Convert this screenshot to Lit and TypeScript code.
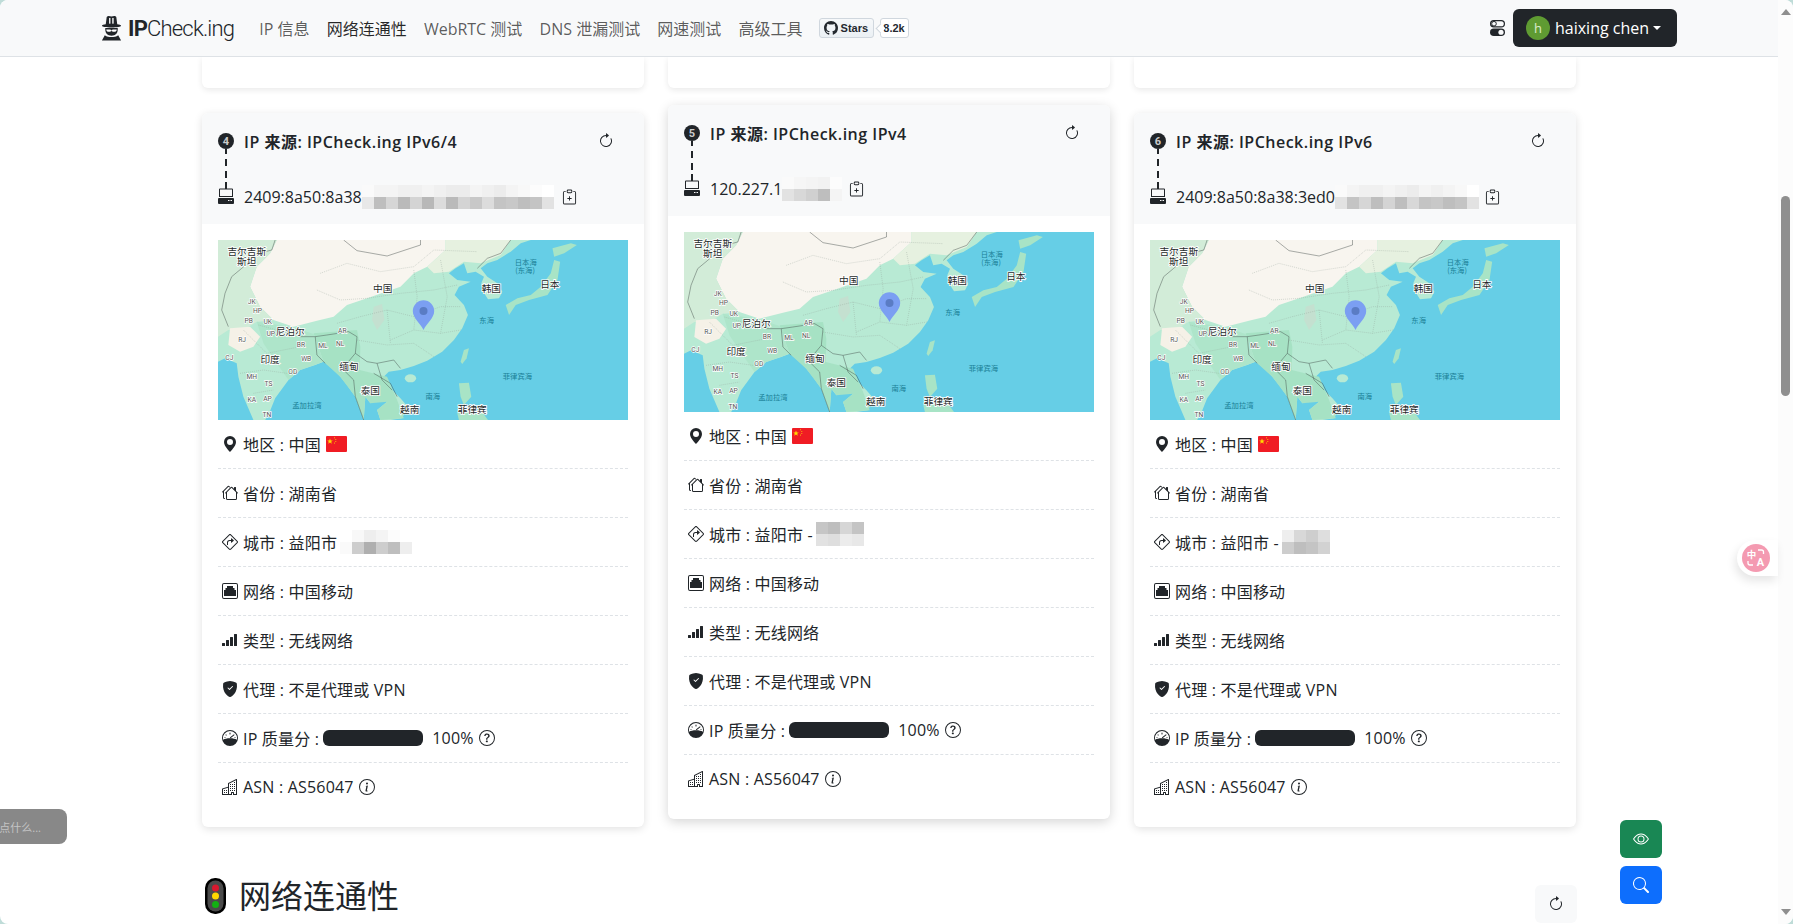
import { LitElement, html, css, svg } from "lit";
import { customElement } from "lit/decorators.js";

const P = {
  refresh: svg`<path fill-rule="evenodd" d="M8 3a5 5 0 1 0 4.546 2.914.5.5 0 0 1 .908-.417A6 6 0 1 1 8 2v1z"/><path d="M8 4.466V.534a.25.25 0 0 1 .41-.192l2.36 1.966c.12.1.12.284 0 .384L8.41 4.658A.25.25 0 0 1 8 4.466z"/>`,
  pin: svg`<path d="M8 16s6-5.686 6-10A6 6 0 0 0 2 6c0 4.314 6 10 6 10zm0-7a3 3 0 1 1 0-6 3 3 0 0 1 0 6z"/>`,
  houses: svg`<path d="M5.793 1a1 1 0 0 1 1.414 0l.647.646a.5.5 0 1 1-.708.708L6.5 1.707 2 6.207V12.5a.5.5 0 0 0 .5.5.5.5 0 0 1 0 1A1.5 1.5 0 0 1 1 12.5V7.207l-.146.147a.5.5 0 0 1-.708-.708L5.793 1Zm3 1a1 1 0 0 1 1.414 0L12 3.793V2.5a.5.5 0 0 1 .5-.5h1a.5.5 0 0 1 .5.5v3.293l1.854 1.853a.5.5 0 0 1-.708.708L15 8.207V13.5a1.5 1.5 0 0 1-1.5 1.5h-8A1.5 1.5 0 0 1 4 13.5V8.207l-.146.147a.5.5 0 1 1-.708-.708L8.793 2Zm.707.707L5 7.207V13.5a.5.5 0 0 0 .5.5h8a.5.5 0 0 0 .5-.5V7.207l-4.5-4.5Z"/>`,
  sign: svg`<path d="M5 8.5A2.5 2.5 0 0 1 7.5 6H9V4.534a.25.25 0 0 1 .41-.192l2.36 1.966c.12.1.12.284 0 .384L9.41 8.658A.25.25 0 0 1 9 8.466V7H7.5A1.5 1.5 0 0 0 6 8.5V11H5V8.5Z"/><path d="M6.95.435c.58-.58 1.52-.58 2.1 0l6.515 6.516c.58.58.58 1.519 0 2.098L9.05 15.565c-.58.58-1.519.58-2.098 0L.435 9.05a1.482 1.482 0 0 1 0-2.098L6.95.435Zm1.4.7a.495.495 0 0 0-.7 0L1.134 7.65a.495.495 0 0 0 0 .7l6.516 6.516a.495.495 0 0 0 .7 0l6.516-6.516a.495.495 0 0 0 0-.7L8.35 1.134Z"/>`,
  ethernet: svg`<path fill-rule="evenodd" d="M2 0h12a2 2 0 0 1 2 2v12a2 2 0 0 1-2 2H2a2 2 0 0 1-2-2V2a2 2 0 0 1 2-2Zm0 1a1 1 0 0 0-1 1v12a1 1 0 0 0 1 1h12a1 1 0 0 0 1-1V2a1 1 0 0 0-1-1H2Z"/><path d="M5 3h6v2h1.500v2H14v6H2V7h1.500V5H5V3Z"/>`,
  bars: svg`<path d="M0 11.5a.5.5 0 0 1 .5-.5h2a.5.5 0 0 1 .5.5v2a.5.5 0 0 1-.5.5h-2a.5.5 0 0 1-.5-.5v-2zm4-3a.5.5 0 0 1 .5-.5h2a.5.5 0 0 1 .5.5v5a.5.5 0 0 1-.5.5h-2a.5.5 0 0 1-.5-.5v-5zm4-3a.5.5 0 0 1 .5-.5h2a.5.5 0 0 1 .5.5v8a.5.5 0 0 1-.5.5h-2a.5.5 0 0 1-.5-.5v-8zm4-3a.5.5 0 0 1 .5-.5h2a.5.5 0 0 1 .5.5v11a.5.5 0 0 1-.5.5h-2a.5.5 0 0 1-.5-.5v-11z"/>`,
  shield: svg`<path fill-rule="evenodd" d="M8 0c-.69 0-1.843.265-2.928.56-1.11.3-2.229.655-2.887.87a1.54 1.54 0 0 0-1.044 1.262c-.596 4.477.787 7.795 2.465 9.99a11.777 11.777 0 0 0 2.517 2.453c.386.273.744.482 1.048.625.28.132.581.24.829.24s.548-.108.829-.24a7.159 7.159 0 0 0 1.048-.625 11.775 11.775 0 0 0 2.517-2.453c1.678-2.195 3.061-5.513 2.465-9.99a1.541 1.541 0 0 0-1.044-1.263 62.467 62.467 0 0 0-2.887-.87C9.843.266 8.69 0 8 0zm2.146 5.146a.5.5 0 0 1 .708.708l-3 3a.5.5 0 0 1-.708 0l-1.5-1.5a.5.5 0 1 1 .708-.708L7.5 7.793l2.646-2.647z"/>`,
  gauge: svg`<path fill-rule="evenodd" d="M8 0a8 8 0 1 1 0 16A8 8 0 0 1 8 0Zm0 1a7 7 0 0 0-6.800 8.700C2.600 8.900 5 8.300 8 8.300s5.400.6 6.800 1.400A7 7 0 0 0 8 1Z"/><path d="M8 2.500a.5.5 0 0 1 .5.5v1a.5.5 0 0 1-1 0V3a.5.5 0 0 1 .5-.5ZM4 4.300l.8.800-.6.600-.8-.8.6-.6Zm8 0 .6.600-4.100 3.400-.7-.7 4.200-3.300ZM2.500 7h1v.8h-1V7Zm10 0h1v.8h-1V7Z"/>`,
  buildings: svg`<path d="M14.763.075A.5.5 0 0 1 15 .5v15a.5.5 0 0 1-.5.5h-3a.5.5 0 0 1-.5-.5V14h-1v1.500a.5.5 0 0 1-.5.5h-9a.5.5 0 0 1-.5-.5V10a.5.5 0 0 1 .342-.474L6 7.640V4.500a.5.5 0 0 1 .276-.447l8-4a.5.5 0 0 1 .487.022ZM6 8.694 1 10.360V15h5V8.694ZM7 15h2v-1.500a.5.5 0 0 1 .5-.5h2a.5.5 0 0 1 .5.5V15h2V1.309l-7 3.500V15Z"/><path d="M2 11h1v1H2v-1Zm2 0h1v1H4v-1Zm-2 2h1v1H2v-1Zm2 0h1v1H4v-1Zm4-4h1v1H8V9Zm2 0h1v1h-1V9Zm-2 2h1v1H8v-1Zm2 0h1v1h-1v-1Zm2-2h1v1h-1V9Zm0 2h1v1h-1v-1ZM8 7h1v1H8V7Zm2 0h1v1h-1V7Zm2 0h1v1h-1V7ZM8 5h1v1H8V5Zm2 0h1v1h-1V5Zm2 0h1v1h-1V5Zm0-2h1v1h-1V3Z"/>`,
  question: svg`<path d="M8 15A7 7 0 1 1 8 1a7 7 0 0 1 0 14zm0 1A8 8 0 1 0 8 0a8 8 0 0 0 0 16z"/><path d="M5.255 5.786a.237.237 0 0 0 .241.247h.825c.138 0 .248-.113.266-.25.09-.656.54-1.134 1.342-1.134.686 0 1.314.343 1.314 1.168 0 .635-.374.927-.965 1.371-.673.489-1.206 1.06-1.168 1.987l.003.217a.25.25 0 0 0 .25.246h.811a.25.25 0 0 0 .25-.25v-.105c0-.718.273-.927 1.01-1.486.609-.463 1.244-.977 1.244-2.056 0-1.511-1.276-2.241-2.673-2.241-1.267 0-2.655.59-2.75 2.286zm1.557 5.763c0 .533.425.927 1.01.927.609 0 1.028-.394 1.028-.927 0-.552-.42-.94-1.029-.94-.584 0-1.009.388-1.009.94z"/>`,
  info: svg`<path d="M8 15A7 7 0 1 1 8 1a7 7 0 0 1 0 14zm0 1A8 8 0 1 0 8 0a8 8 0 0 0 0 16z"/><path d="m8.93 6.588-2.29.287-.082.38.45.083c.294.07.352.176.288.469l-.738 3.468c-.194.897.105 1.319.808 1.319.545 0 1.178-.252 1.465-.598l.088-.416c-.2.176-.492.246-.686.246-.275 0-.375-.193-.304-.533L8.93 6.588zM9 4.500a1 1 0 1 1-2 0 1 1 0 0 1 2 0z"/>`,
  eye: svg`<path d="M16 8s-3-5.500-8-5.500S0 8 0 8s3 5.500 8 5.500S16 8 16 8zM1.173 8a13.133 13.133 0 0 1 1.660-2.043C4.120 4.668 5.880 3.500 8 3.500c2.120 0 3.879 1.168 5.168 2.457A13.133 13.133 0 0 1 14.828 8c-.058.087-.122.183-.195.288-.335.480-.830 1.120-1.465 1.755C11.879 11.332 10.119 12.500 8 12.500c-2.120 0-3.879-1.168-5.168-2.457A13.134 13.134 0 0 1 1.172 8z"/><path d="M8 5.500a2.500 2.500 0 1 0 0 5 2.500 2.500 0 0 0 0-5zM4.500 8a3.500 3.500 0 1 1 7 0 3.500 3.500 0 0 1-7 0z"/>`,
  search: svg`<path d="M11.742 10.344a6.500 6.500 0 1 0-1.397 1.398h-.001c.03.04.062.078.098.115l3.850 3.850a1 1 0 0 0 1.415-1.414l-3.850-3.850a1.007 1.007 0 0 0-.115-.1zM12 6.500a5.500 5.500 0 1 1-11 0 5.500 5.500 0 0 1 11 0z"/>`,
  github: svg`<path d="M8 0C3.580 0 0 3.580 0 8c0 3.540 2.290 6.530 5.470 7.590.4.07.55-.17.55-.38 0-.19-.01-.82-.01-1.490-2.010.37-2.530-.49-2.690-.94-.09-.23-.48-.94-.82-1.130-.28-.15-.68-.52-.01-.53.63-.01 1.080.58 1.230.82.72 1.210 1.870.87 2.330.66.07-.52.28-.87.51-1.070-1.780-.2-3.640-.89-3.640-3.950 0-.87.31-1.590.82-2.150-.08-.2-.36-1.020.08-2.120 0 0 .67-.21 2.200.82.64-.18 1.320-.27 2-.27.68 0 1.360.09 2 .27 1.530-1.040 2.200-.82 2.200-.82.44 1.100.16 1.920.08 2.120.51.56.82 1.270.82 2.150 0 3.070-1.870 3.750-3.650 3.950.29.25.54.73.54 1.480 0 1.070-.01 1.930-.01 2.200 0 .21.15.46.55.38A8.012 8.012 0 0 0 16 8c0-4.420-3.580-8-8-8z"/>`,
  clip: svg`<path d="M4 1.500H3a2 2 0 0 0-2 2V14a2 2 0 0 0 2 2h10a2 2 0 0 0 2-2V3.500a2 2 0 0 0-2-2h-1v1h1a1 1 0 0 1 1 1V14a1 1 0 0 1-1 1H3a1 1 0 0 1-1-1V3.500a1 1 0 0 1 1-1h1v-1z"/><path d="M9.500 1a.5.5 0 0 1 .5.5v1a.5.5 0 0 1-.5.5h-3a.5.5 0 0 1-.5-.5v-1a.5.5 0 0 1 .5-.5h3zm-3-1A1.500 1.500 0 0 0 5 1.500v1A1.500 1.500 0 0 0 6.500 4h3A1.500 1.500 0 0 0 11 2.500v-1A1.500 1.500 0 0 0 9.500 0h-3z"/><path d="M8 7a.5.5 0 0 1 .5.5V9H10a.5.5 0 0 1 0 1H8.500v1.500a.5.5 0 0 1-1 0V10H6a.5.5 0 0 1 0-1h1.500V7.500A.5.5 0 0 1 8 7z"/>`,
};

const icon = (p: unknown, cls = "ico") =>
  html`<svg class=${cls} viewBox="0 0 16 16" fill="currentColor">${p}</svg>`;

const LABELS: [string, number, number][] = [
  ["吉尔吉斯", 140, 68], ["斯坦", 140, 96], ["中国", 547, 178], ["韩国", 872, 178], ["日本", 1047, 165],
  ["尼泊尔", 270, 307], ["印度", 210, 390], ["缅甸", 446, 412], ["泰国", 510, 485], ["越南", 628, 541], ["菲律宾", 815, 541],
];
const SEA: [string, number, number][] = [
  ["日本海", 975, 100], ["(东海)", 973, 124], ["东海", 858, 272], ["南海", 697, 500], ["菲律宾海", 950, 440], ["孟加拉湾", 320, 528],
];
const ABBR: [string, number, number][] = [
  ["JK", 155, 218], ["HP", 172, 245], ["PB", 146, 273], ["UK", 203, 276], ["UP", 212, 312], ["RJ", 126, 330], ["BR", 302, 345],
  ["ML", 368, 348], ["NL", 420, 342], ["AR", 426, 303], ["WB", 318, 388], ["CJ", 88, 384], ["MH", 155, 441], ["TS", 205, 464],
  ["OD", 278, 426], ["KA", 155, 511], ["AP", 202, 507], ["TN", 200, 556],
];

const LAND = "M54 30L990 30L960 40L930 65L890 90L860 100L840 115L860 140L890 160L905 185L895 205L862 208L848 185L842 160L850 140L825 125L800 130L790 100L765 115L745 130L770 150L810 155L775 170L762 195L790 225L802 255L785 295L760 330L725 365L680 392L640 408L600 420L565 425L540 450L575 480L600 505L622 530L605 565L570 570L540 570L530 540L560 515L540 505L510 520L495 500L490 570L465 500L440 465L420 440L395 415L370 395L345 405L300 420L265 450L225 505L205 555L195 570L160 570L130 500L115 440L110 400L75 385L54 395Z";

const mapView = () => html`<svg class="map" viewBox="54 30 1227 540" preserveAspectRatio="none">
  <rect x="54" y="30" width="1227" height="540" fill="#66cee6"/>
  <path d=${LAND} fill="#b8ead4"/>
  <path d="M230 30L735 30L735 60L680 110L640 130L600 170L500 205L440 225L400 260L350 272L280 290L220 270L180 230L150 170L170 110L210 70Z" fill="#f8f5ef"/>
  <path d="M735 30L930 30L900 75L840 100L790 95L745 125L700 130L680 110L735 60Z" fill="#e6f1e0"/>
  <path d="M54 30L230 30L210 70L170 110L150 170L180 230L220 270L170 275L130 300L85 300L54 320Z" fill="#d2ecd8"/>
  <path d="M90 295L150 290L180 320L160 350L120 365L85 345Z" fill="#f5f1e7"/>
  <path d="M340 310L470 300L480 350L478 420L560 440L590 510L610 565L540 570L530 540L560 515L510 520L495 500L490 570L465 500L420 440L370 395Z" fill="#a6e2c4"/>
  <path d="M170 275L280 292L340 312L370 395L300 420L265 450L230 400L190 340Z" fill="#aee5ca"/>
  <path d="M520 230L545 222L552 270L530 300L515 270Z" fill="#c4e0d0"/>
  <path d="M915 225L925 255L945 225L985 210L1040 195L1070 150L1078 95L1060 90L1050 130L1020 170L990 195L950 205Z" fill="#a8e4c6"/>
  <path d="M1055 55L1110 40L1128 45L1090 70L1060 80Z" fill="#a8e4c6"/>
  <path d="M780 395L790 360L805 355L798 385L785 402Z" fill="#a8e4c6"/>
  <ellipse cx="630" cy="445" rx="17" ry="12" fill="#b8ead4"/>
  <path d="M775 460L805 458L812 500L790 525L780 500Z" fill="#a8e4c6"/>
  <path d="M770 550L840 540L862 570L775 570Z" fill="#a8e4c6"/>
  <g fill="none" stroke="#3c4644" stroke-width="1.300">
    <path d="M430 30L470 62L560 78L660 45L660 30"/>
    <path d="M930 30L900 70L860 85L830 115"/>
    <path d="M225 30L215 60L175 70L125 115L95 140L75 190L65 240L85 290"/>
    <path d="M300 320L345 320L380 315L445 305L470 320L465 370L500 395L530 400L580 390L600 415"/>
    <path d="M345 320L350 375L375 400M465 370L440 400L420 410L460 450L465 500L490 570M530 400L545 450L575 480M520 430L570 460L590 500"/>
  </g>
  <g fill="none" stroke="#8f9e96" stroke-width="1.100" stroke-dasharray="3 3">
    <path d="M175 285L230 300L300 320M360 130L440 100L540 125L640 110L700 60L830 65M350 180L420 210L500 205L600 190L700 180L770 165M480 260L560 240L640 260L720 230L780 230M570 330L640 300L720 310L780 300M470 330L560 345L640 340L700 380M640 120L650 200L640 300M720 90L740 200L720 310M560 240L570 340M410 280L480 260"/>
    <path d="M130 300L200 370L250 360L300 350M120 430L190 420L260 430M160 490L220 480"/>
  </g>
  <g font-family="'Noto Sans CJK SC',sans-serif" font-size="29" fill="#1d2a2a" text-anchor="middle" dominant-baseline="middle" paint-order="stroke" stroke="#fff" stroke-width="5">
    ${LABELS.map(([t, x, y]) => svg`<text x=${x} y=${y}>${t}</text>`)}
  </g>
  <g font-family="'Noto Sans CJK SC',sans-serif" font-size="22" fill="#1a7f96" text-anchor="middle" dominant-baseline="middle">
    ${SEA.map(([t, x, y]) => svg`<text x=${x} y=${y}>${t}</text>`)}
  </g>
  <g font-family="Roboto,sans-serif" font-size="20" fill="#555" text-anchor="middle" dominant-baseline="middle" paint-order="stroke" stroke="#fff" stroke-width="4">
    ${ABBR.map(([t, x, y]) => svg`<text x=${x} y=${y}>${t}</text>`)}
  </g>
  <path d="M669 300C660 280 637 265 637 243A32 32 0 0 1 701 243C701 265 678 280 669 300Z" fill="#7b9ff2"/>
  <circle cx="669" cy="243" r="12" fill="#5a7cc4"/>
</svg>`;

const flag = () => html`<svg class="flag" viewBox="0 0 21 16">
  <rect width="21" height="16" rx="1" fill="#f01c24"/>
  <path d="M4 2.500l.8 1.900 2 .1-1.600 1.200.6 2-1.800-1.100-1.800 1.100.6-2L1.200 4.500l2-.1Z" fill="#ffdc00"/>
  <circle cx="8.500" cy="1.800" r=".5" fill="#ffdc00"/><circle cx="9.800" cy="3.400" r=".5" fill="#ffdc00"/>
  <circle cx="9.800" cy="5.400" r=".5" fill="#ffdc00"/><circle cx="8.500" cy="7" r=".5" fill="#ffdc00"/>
</svg>`;

const mosaic = (rows: number[][]) => html`<span class="mosaic">${rows.map(
  (r) => html`<span class="mrow">${r.map((v) => html`<i style="background:rgb(${v},${v},${v})"></i>`)}</span>`
)}</span>`;

interface CardData {
  n: number;
  title: string;
  ip: string;
  ipBlur: number[][];
  ipGap: number;
  city: string;
  cityBlur: number[][];
  lift?: boolean;
}

const CARDS: CardData[] = [
  {
    n: 4, title: "IP 来源: IPCheck.ing IPv6/4", ip: "2409:8a50:8a38", ipGap: 8,
    ipBlur: [
      [250, 244, 244, 240, 240, 244, 240, 236, 236, 244, 240, 236, 244, 248, 252, 255],
      [232, 190, 214, 186, 212, 184, 220, 186, 212, 200, 220, 196, 200, 190, 196, 226],
    ],
    city: "城市 : 益阳市", cityBlur: [[255, 248, 238, 244, 252, 255], [250, 205, 175, 205, 190, 238]],
  },
  {
    n: 5, title: "IP 来源: IPCheck.ing IPv4", ip: "120.227.1", ipGap: 7, lift: true,
    ipBlur: [[250, 246, 244, 242, 252], [226, 216, 208, 190, 244]],
    city: "城市 : 益阳市 -", cityBlur: [[198, 190, 214, 196], [226, 222, 236, 232]],
  },
  {
    n: 6, title: "IP 来源: IPCheck.ing IPv6", ip: "2409:8a50:8a38:3ed0", ipGap: 6,
    ipBlur: [
      [250, 244, 240, 240, 244, 240, 236, 244, 240, 244, 248, 255],
      [226, 196, 214, 190, 212, 190, 216, 196, 200, 190, 196, 226],
    ],
    city: "城市 : 益阳市 -", cityBlur: [[238, 216, 206, 222], [205, 190, 196, 210]],
  },
];

@customElement("app-root")
export class AppRoot extends LitElement {
  static styles = css`
    :host { display: block; height: 924px; background: #bfdcd8; font-family: "Open Sans", "Noto Sans CJK SC", sans-serif; font-size: 16px; color: #212529; overflow: hidden; }
    * { box-sizing: border-box; }
    .frame { position: relative; display: flex; height: 924px; background: #fff; border-radius: 8px; overflow: hidden; }
    .page { flex: 1; min-width: 0; display: flex; flex-direction: column; }
    .nav { flex: none; height: 57px; background: #f8f9fa; border-bottom: 1px solid #dee2e6; display: flex; align-items: center; padding: 0 101px 0 100px; }
    .brand { display: flex; align-items: center; gap: 5px; margin-right: 25px; font-family: Roboto, sans-serif; font-size: 22px; font-weight: 300; letter-spacing: -0.8px; color: #212529; }
    .brand b { font-weight: 700; }
    .brand svg { width: 23px; height: 26px; display: block; }
    .links { display: flex; gap: 17.200px; color: rgba(0, 0, 0, 0.65); }
    .links .on { color: rgba(0, 0, 0, 0.85); }
    .gh { display: flex; align-items: center; margin-left: 16px; font: 700 11px "Liberation Sans", sans-serif; color: #24292f; }
    .gh-btn { display: flex; align-items: center; gap: 3px; height: 20px; width: 55px; padding-left: 4px; border: 1px solid #d0d7de; border-radius: 3px; background: linear-gradient(#f6f8fa, #ebf0f4); }
    .gh-btn svg { width: 14px; height: 14px; }
    .gh-count { position: relative; margin-left: 6px; height: 20px; width: 29px; display: flex; align-items: center; justify-content: center; border: 1px solid #d0d7de; border-radius: 3px; background: #fff; }
    .gh-count::before { content: ""; position: absolute; left: -4px; top: 6px; width: 6px; height: 6px; background: #fff; border-left: 1px solid #d0d7de; border-bottom: 1px solid #d0d7de; transform: rotate(45deg); }
    .spacer { flex: 1; }
    .toggles { width: 15px; height: 16px; margin-right: 8px; display: block; }
    .user { display: flex; align-items: center; height: 38px; width: 164px; padding-left: 13px; background: #212529; color: #fff; border-radius: 6px; }
    .avatar { width: 24px; height: 24px; border-radius: 50%; background: #5f9b32; color: #dcebcb; font-size: 13px; display: flex; align-items: center; justify-content: center; margin-right: 5px; }
    .caret { margin-left: 4px; border-top: 4.800px solid #fff; border-left: 4.800px solid transparent; border-right: 4.800px solid transparent; }

    .main { flex: 1; min-height: 0; overflow: hidden; padding: 0 202px; }
    .grid { display: grid; grid-template-columns: repeat(3, 1fr); column-gap: 24px; }
    .stub { height: 31px; background: #fff; border-radius: 0 0 6px 6px; box-shadow: 0 2px 6px rgba(0, 0, 0, 0.09); }
    .cards { margin-top: 25px; align-items: start; }
    .card { background: #fff; border-radius: 6px; box-shadow: 0 2px 8px rgba(0, 0, 0, 0.12); overflow: hidden; }
    .card.lift { margin-top: -8px; box-shadow: 0 3px 12px rgba(0, 0, 0, 0.17); }
    .head { display: flex; gap: 10px; height: 111px; padding: 9px 16px 0; background: #f8f9fa; }
    .trace { flex: none; width: 16px; height: 72px; margin-top: 11px; display: block; }
    .head-body { flex: 1; min-width: 0; }
    .title-row { display: flex; align-items: center; justify-content: space-between; height: 38px; font-weight: 600; letter-spacing: 0.5px; }
    .refresh { width: 42px; height: 38px; margin-right: 1px; display: flex; align-items: center; justify-content: center; color: #212529; }
    .ip-row { display: flex; align-items: center; height: 24px; margin-top: 25px; white-space: nowrap; }
    .clip { flex: none; width: 15px; height: 16px; display: block; }
    .mosaic { display: inline-flex; flex-direction: column; flex: none; }
    .mrow { display: flex; height: 12px; }
    .mrow i { width: 12px; height: 12px; display: block; }
    .body { padding: 16px; }
    .map { display: block; width: 100%; height: 180px; }
    .row { display: flex; align-items: center; height: 49px; padding: 0 4px; border-bottom: 1px dashed #dee2e6; white-space: nowrap; letter-spacing: 0.2px; }
    .row.last { border-bottom: 0; height: 48px; }
    .ico { width: 16px; height: 16px; flex: none; display: block; margin-right: 5px; }
    .sm { width: 16px; height: 16px; flex: none; display: block; }
    .flag { width: 21px; height: 16px; margin-left: 5px; flex: none; display: block; }
    .bar { width: 100px; height: 16px; background: #212529; border-radius: 6px; margin: 0 9px 0 4px; flex: none; }
    .tip { width: 16px; height: 16px; margin-left: 5px; flex: none; display: block; }
    .row .mosaic { margin-left: 3px; }

    .heading { display: flex; justify-content: space-between; align-items: flex-start; margin-top: 51px; }
    .heading-l { display: flex; align-items: center; gap: 13px; margin-left: 3px; font-size: 32px; line-height: 36px; }
    .light { width: 21px; height: 36px; display: block; }
    .flat { width: 42px; height: 38px; margin: 7px -1px 0 0; background: #f8f9fa; border-radius: 6px; display: flex; align-items: center; justify-content: center; }

    .bar-v { flex: none; width: 15px; background: #fcfcfc; display: flex; flex-direction: column; align-items: center; }
    .up { margin-top: 9px; border-bottom: 6px solid #8f8f8f; border-left: 5px solid transparent; border-right: 5px solid transparent; }
    .thumb { margin-top: 181px; width: 9px; height: 200px; background: #8f8f8f; border-radius: 5px; }
    .down { margin-top: auto; margin-bottom: 9px; border-top: 6px solid #8f8f8f; border-left: 5px solid transparent; border-right: 5px solid transparent; }

    .toast { position: absolute; left: 0; top: 809px; width: 67px; height: 35px; background: #888; border-radius: 0 8px 8px 0; color: #c4c4c4; font-size: 11px; display: flex; align-items: center; justify-content: flex-end; padding-right: 26px; white-space: nowrap; }
    .fab { position: absolute; left: 1620px; width: 42px; height: 38px; border-radius: 6px; color: #fff; display: flex; align-items: center; justify-content: center; }
    .fab.green { top: 820px; background: #198754; }
    .fab.blue { top: 866px; background: #0d6efd; }
    .translate { position: absolute; left: 1737px; top: 540px; width: 41px; height: 36px; padding: 4px 0 0 5px; background: #fff; border-radius: 18px 0 0 18px; box-shadow: -2px 5px 10px rgba(0, 0, 0, 0.1); }
    .translate svg { width: 28px; height: 28px; display: block; }
  `;

  private card(c: CardData) {
    return html`<div class="card ${c.lift ? "lift" : ""}">
      <div class="head">
        <svg class="trace" viewBox="0 0 16 72">
          <circle cx="8" cy="8" r="8" fill="#212529"/>
          <text x="8" y="12" font-size="11" font-weight="700" fill="#ccc" text-anchor="middle" font-family="Roboto,sans-serif">${c.n}</text>
          <path d="M8 16V21M8 26V33M8 38V45M8 49V56" stroke="#212529" stroke-width="2"/>
          <path fill-rule="evenodd" d="M2 55.500h12a1 1 0 0 1 1 1V64H1v-7.500a1 1 0 0 1 1-1Zm0 1v6.500h12v-6.500H2Z" fill="#212529"/>
          <rect x="0" y="65" width="16" height="6" rx="1" fill="#212529"/>
          <path d="M10 67.500h1.500M12.500 67.500H14" stroke="#f8f9fa"/>
        </svg>
        <div class="head-body">
          <div class="title-row"><span>${c.title}</span><span class="refresh">${icon(P.refresh, "sm")}</span></div>
          <div class="ip-row"><span>${c.ip}</span>${mosaic(c.ipBlur)}<svg class="clip" style="margin-left:${c.ipGap}px" viewBox="0 0 16 16" fill="#212529">${P.clip}</svg></div>
        </div>
      </div>
      <div class="body">
        ${mapView()}
        <div class="row">${icon(P.pin)}<span>地区 : 中国</span>${flag()}</div>
        <div class="row">${icon(P.houses)}<span>省份 : 湖南省</span></div>
        <div class="row">${icon(P.sign)}<span>${c.city}</span>${mosaic(c.cityBlur)}</div>
        <div class="row">${icon(P.ethernet)}<span>网络 : 中国移动</span></div>
        <div class="row">${icon(P.bars)}<span>类型 : 无线网络</span></div>
        <div class="row">${icon(P.shield)}<span>代理 : 不是代理或 VPN</span></div>
        <div class="row">${icon(P.gauge)}<span>IP 质量分 :</span><span class="bar"></span><span>100%</span>${icon(P.question, "tip")}</div>
        <div class="row last">${icon(P.buildings)}<span>ASN : AS56047</span>${icon(P.info, "tip")}</div>
      </div>
    </div>`;
  }

  render() {
    return html`<div class="frame">
      <div class="page">
        <nav class="nav">
          <div class="brand">
            <svg viewBox="0 0 24 26" fill="#212529">
              <path d="M7 1.500C8 0 10 .5 12 1c2-.5 4-1 5 .5L18 9c2 .3 4 .8 4 1.700S17.500 12.500 12 12.500 2 11.600 2 10.700 4 9.300 6 9Z"/>
              <rect x="9.500" y="2.500" width="1.400" height="6" fill="#fff"/><rect x="12.800" y="2.500" width="1.400" height="6" fill="#fff"/>
              <path d="M5.500 13h13v1.500c0 4-2.500 6.500-6.500 6.500s-6.500-2.500-6.500-6.500Z"/>
              <path d="M6.500 14.500h4.300l1.200 1 1.200-1h4.300c-.2 2-1.500 2.500-3 2.500-1.200 0-2-.5-2.500-1.200-.5.7-1.300 1.200-2.500 1.200-1.500 0-2.800-.5-3-2.500Z" fill="#fff"/>
              <path d="M5 20.500c2 1.500 4.500 2 7 2s5-.5 7-2l3 5.500H2Z"/>
            </svg>
            <span><b>IP</b>Check.ing</span>
          </div>
          <div class="links">
            <span>IP 信息</span><span class="on">网络连通性</span><span>WebRTC 测试</span><span>DNS 泄漏测试</span><span>网速测试</span><span>高级工具</span>
          </div>
          <div class="gh">
            <span class="gh-btn"><svg viewBox="0 0 16 16" fill="#24292f">${P.github}</svg>Stars</span>
            <span class="gh-count">8.2k</span>
          </div>
          <span class="spacer"></span>
          <svg class="toggles" viewBox="0 0 15 16">
            <rect x=".6" y=".6" width="13.800" height="6.300" rx="3.150" fill="none" stroke="#212529" stroke-width="1.200"/>
            <circle cx="4" cy="3.750" r="2.300" fill="none" stroke="#212529"/>
            <rect y="8.500" width="15" height="7.500" rx="3.750" fill="#212529"/>
            <circle cx="11" cy="12.250" r="2.600" fill="#f8f9fa"/>
          </svg>
          <div class="user"><span class="avatar">h</span><span>haixing chen</span><span class="caret"></span></div>
        </nav>
        <main class="main">
          <div class="grid"><div class="stub"></div><div class="stub"></div><div class="stub"></div></div>
          <div class="grid cards">${CARDS.map((c) => this.card(c))}</div>
          <div class="heading">
            <div class="heading-l">
              <svg class="light" viewBox="0 0 21 36">
                <rect width="21" height="36" rx="10" fill="#000"/>
                <rect x="2.500" y="2.500" width="16" height="31" rx="8" fill="#4a4a4a"/>
                <circle cx="10.500" cy="10" r="3.500" fill="#d9182e"/>
                <circle cx="10.500" cy="18" r="3.500" fill="#ffd800"/>
                <circle cx="10.500" cy="26.500" r="3.500" fill="#12b012"/>
              </svg>
              <span>网络连通性</span>
            </div>
            <span class="flat">${icon(P.refresh, "sm")}</span>
          </div>
        </main>
      </div>
      <aside class="bar-v"><span class="up"></span><span class="thumb"></span><span class="down"></span></aside>

      <div class="toast">点什么...</div>
      <div class="translate">
        <svg viewBox="0 0 28 28">
          <circle cx="14" cy="14" r="14" fill="#f49ab1"/>
          <text x="9.500" y="14" font-size="9.500" font-weight="700" fill="#fff" text-anchor="middle" font-family="'Noto Sans CJK SC',sans-serif">中</text>
          <text x="18.500" y="22" font-size="11" font-weight="700" fill="#fff" text-anchor="middle" font-family="Roboto,sans-serif">A</text>
          <path d="M16 6h3.500a2 2 0 0 1 2 2v2M6 17v2a2 2 0 0 0 2 2h3" fill="none" stroke="#fff" stroke-width="1.300"/>
        </svg>
      </div>
      <span class="fab green">${icon(P.eye, "sm")}</span>
      <span class="fab blue">${icon(P.search, "sm")}</span>
    </div>`;
  }
}
